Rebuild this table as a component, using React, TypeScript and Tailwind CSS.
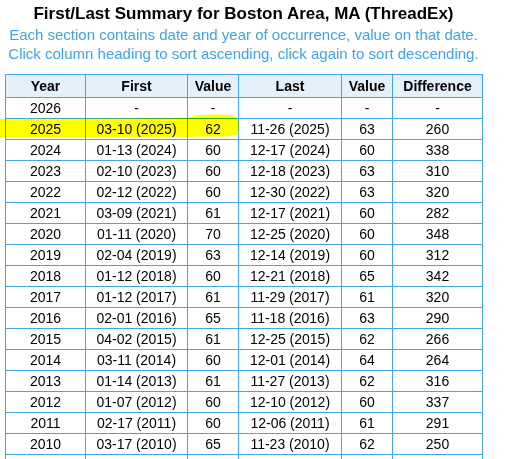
const rows: [string, string, string, string, string, string][] = [
  ['2026', '-', '-', '-', '-', '-'],
  ['2025', '03-10 (2025)', '62', '11-26 (2025)', '63', '260'],
  ['2024', '01-13 (2024)', '60', '12-17 (2024)', '60', '338'],
  ['2023', '02-10 (2023)', '60', '12-18 (2023)', '63', '310'],
  ['2022', '02-12 (2022)', '60', '12-30 (2022)', '63', '320'],
  ['2021', '03-09 (2021)', '61', '12-17 (2021)', '60', '282'],
  ['2020', '01-11 (2020)', '70', '12-25 (2020)', '60', '348'],
  ['2019', '02-04 (2019)', '63', '12-14 (2019)', '60', '312'],
  ['2018', '01-12 (2018)', '60', '12-21 (2018)', '65', '342'],
  ['2017', '01-12 (2017)', '61', '11-29 (2017)', '61', '320'],
  ['2016', '02-01 (2016)', '65', '11-18 (2016)', '63', '290'],
  ['2015', '04-02 (2015)', '61', '12-25 (2015)', '62', '266'],
  ['2014', '03-11 (2014)', '60', '12-01 (2014)', '64', '264'],
  ['2013', '01-14 (2013)', '61', '11-27 (2013)', '62', '316'],
  ['2012', '01-07 (2012)', '60', '12-10 (2012)', '60', '337'],
  ['2011', '02-17 (2011)', '60', '12-06 (2011)', '61', '291'],
  ['2010', '03-17 (2010)', '65', '11-23 (2010)', '62', '250'],
  ['2009', '03-20 (2009)', '62', '12-09 (2009)', '61', '264'],
];

const headers = [
  { label: 'Year', w: 'w-[80px]' },
  { label: 'First', w: 'w-[102px]' },
  { label: 'Value', w: 'w-[51px]' },
  { label: 'Last', w: 'w-[103px]' },
  { label: 'Value', w: 'w-[51px]' },
  { label: 'Difference', w: 'w-[90px]' },
];

export default function App() {
  return (
    <div className="relative w-[511px] h-[459px] overflow-hidden bg-white font-['Liberation_Sans',Arial,sans-serif] text-black">
      <div className="w-[487px] text-center">
        <h1 className="pt-[4px] text-[17px] leading-[20px] font-bold">
          First/Last Summary for Boston Area, MA (ThreadEx)
        </h1>
        <p className="pt-[1px] text-[15px] leading-[19px] text-[#3fa3e3] whitespace-nowrap">
          Each section contains date and year of occurrence, value on that date.
          <br />
          Click column heading to sort ascending, click again to sort descending.
        </p>
        <table className="mt-[11px] ml-[5px] border-collapse text-[14px]">
          <thead>
            <tr>
              {headers.map((h, i) => (
                <th
                  key={i}
                  className={`${h.w} h-[22px] p-0 border border-[#45a6e2] bg-[#e4f0fa] font-bold leading-[22px] cursor-pointer`}
                >
                  {h.label}
                </th>
              ))}
            </tr>
          </thead>
          <tbody>
            {rows.map((r) => (
              <tr key={r[0]}>
                {r.map((c, i) => (
                  <td key={i} className="h-[20px] p-0 border border-[#45a6e2] leading-[20px]">
                    {c}
                  </td>
                ))}
              </tr>
            ))}
          </tbody>
        </table>
      </div>

      {/* marker highlight over 2025 row */}
      <svg
        className="absolute left-0 top-[112px] mix-blend-multiply pointer-events-none"
        width="242"
        height="28"
        viewBox="0 0 242 28"
      >
        <path
          d="M0 7 L120 6.5 L188 6 L196 3.5 L214 2.5 L230 3 L236 5 L238.5 10 L238.5 19 L236 23 L226 24.5 L150 25 L60 25.3 L0 25.3 Z"
          fill="#ffff00"
        />
      </svg>
    </div>
  );
}
